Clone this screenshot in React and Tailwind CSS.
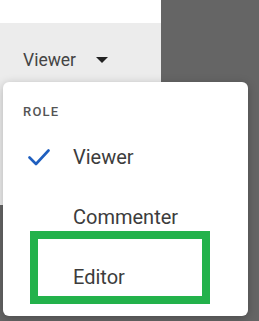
import { useState } from "react";

const ROLES = ["Viewer", "Commenter", "Editor"];

function Check() {
  return (
    <svg width="22" height="17" viewBox="0 0 22 17" fill="none" className="ml-[5px]">
      <path d="M1.5 8.5 L8 15 L20.5 1.5" stroke="#1f5fbf" strokeWidth="2.6" strokeLinecap="round" strokeLinejoin="round" />
    </svg>
  );
}

function Caret() {
  return (
    <svg width="12" height="6" viewBox="0 0 12 6" className="ml-[20px]">
      <path d="M0 0 H12 L6 6 Z" fill="#222" />
    </svg>
  );
}

export default function App() {
  const [role] = useState("Viewer");

  return (
    <div className="relative w-[259px] h-[321px] bg-[#656565] overflow-hidden" style={{ fontFamily: "Roboto, 'Liberation Sans', sans-serif" }}>
      <div className="flex flex-col w-[161px]">
        <div className="h-[23px] bg-white" />
        <div className="h-[182px] bg-[#ececec] pl-[23px] pt-[26px]">
          <div className="flex items-center h-[22px]">
            <span className="text-[17.5px] text-[#444]">Viewer</span>
            <Caret />
          </div>
        </div>
      </div>

      {/* role menu */}
      <div className="absolute left-[3px] top-[82px] w-[245px] h-[234px] bg-white rounded-[6px] shadow-[0_2px_10px_rgba(0,0,0,0.25)] px-[20px] pt-[22px]">
        <div className="text-[13px] leading-[16px] tracking-[1.2px] font-medium text-[#555] mb-[7px]">ROLE</div>
        {ROLES.map((r) => (
          <div key={r} className="flex items-center h-[60px]">
            <div className="w-[50px] flex items-center">{r === role && <Check />}</div>
            <span className="text-[20px] text-[#3c3c3c]">{r}</span>
          </div>
        ))}
      </div>

      {/* highlight */}
      <div className="absolute left-[30px] top-[231px] w-[180px] h-[73px] border-[8px] border-[#23b24b]" />
    </div>
  );
}
